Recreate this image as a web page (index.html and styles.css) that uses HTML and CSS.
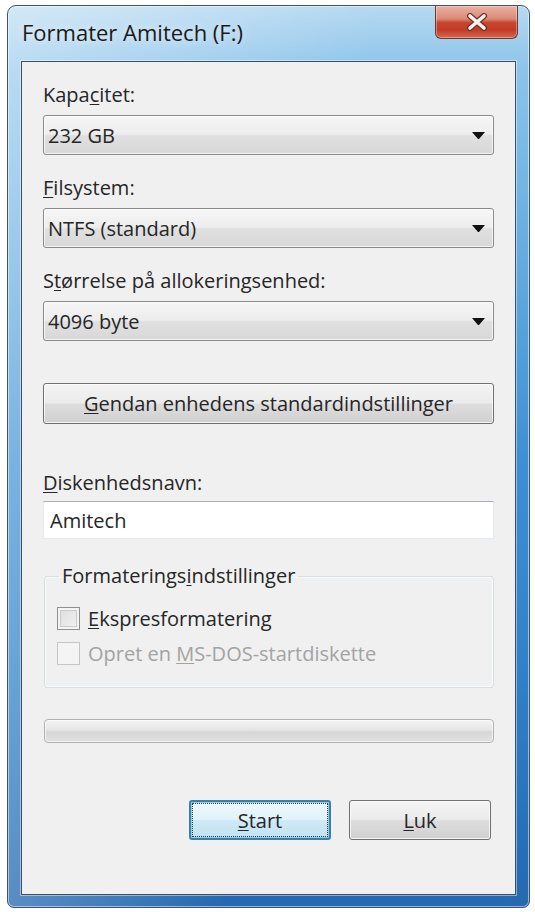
FILE: index.html
```html
<!DOCTYPE html>
<html lang="da">
<head>
    <meta charset="UTF-8">
    <meta name="viewport" content="width=device-width, initial-scale=1.0">
    <title>Formater Amitech (F:)</title>
    <link rel="stylesheet" href="styles.css">
</head>
<body>
    <div class="window">
        <div class="titlebar">
            <span class="title">Formater Amitech (F:)</span>
            <div class="close-btn">
                <svg width="24" height="18" viewBox="0 0 24 18">
                    <path d="M5 3 L19 15 M19 3 L5 15" stroke="#6a3228" stroke-width="6" stroke-linecap="round"/>
                    <path d="M5 3 L19 15 M19 3 L5 15" stroke="#fbf1ec" stroke-width="3.6" stroke-linecap="round"/>
                </svg>
            </div>
        </div>

        <div class="client">
            <div class="label">Kapa<u>c</u>itet:</div>
            <div class="combo">
                <span>232 GB</span>
                <svg class="arrow" width="13" height="7" viewBox="0 0 13 7"><path d="M0 0 H13 L7 7 H6 Z" fill="#111"/></svg>
            </div>

            <div class="label"><u>F</u>ilsystem:</div>
            <div class="combo">
                <span>NTFS (standard)</span>
                <svg class="arrow" width="13" height="7" viewBox="0 0 13 7"><path d="M0 0 H13 L7 7 H6 Z" fill="#111"/></svg>
            </div>

            <div class="label">S<u>t</u>ørrelse på allokeringsenhed:</div>
            <div class="combo">
                <span>4096 byte</span>
                <svg class="arrow" width="13" height="7" viewBox="0 0 13 7"><path d="M0 0 H13 L7 7 H6 Z" fill="#111"/></svg>
            </div>

            <div class="btn wide"><u>G</u>endan enhedens standardindstillinger</div>

            <div class="label name-label"><u>D</u>iskenhedsnavn:</div>
            <div class="textbox">Amitech</div>

            <fieldset class="group">
                <legend>Formaterings<u>i</u>ndstillinger</legend>
                <div class="check-row">
                    <span class="checkbox"></span>
                    <span><u>E</u>kspresformatering</span>
                </div>
                <div class="check-row disabled">
                    <span class="checkbox"></span>
                    <span>Opret en <u>M</u>S-DOS-startdiskette</span>
                </div>
            </fieldset>

            <div class="progress"></div>

            <div class="actions">
                <div class="btn default"><u>S</u>tart</div>
                <div class="btn"><u>L</u>uk</div>
            </div>
        </div>
    </div>
</body>
</html>
```

FILE: styles.css
```css
body {
    margin: 0;
    background: #fff;
    font-family: "Open Sans", "Noto Sans", sans-serif;
    font-size: 20px;
    color: #262626;
}

u {
    text-decoration-thickness: 1px;
    text-underline-offset: 2px;
}

.window {
    width: 523px;
    height: 903px;
    margin: 5px 0 0 7px;
    box-sizing: border-box;
    border: 1px solid #3f5366;
    border-radius: 9px 9px 7px 7px;
    padding: 0 13px 12px 13px;
    display: flex;
    flex-direction: column;
    background:
        linear-gradient(100deg, rgba(255,255,255,0.4) 0%, rgba(255,255,255,0.12) 40%, rgba(255,255,255,0) 55%),
        linear-gradient(180deg, #b6d9f1 0%, #8cc4ea 7%, #6aafe0 25%, #3f90d2 50%, #2f80c6 75%, #2569b0 100%);
    box-shadow: inset 0 0 0 1px rgba(255,255,255,0.5);
}

.titlebar {
    height: 55px;
    display: flex;
    align-items: flex-start;
    flex-shrink: 0;
}

.title {
    font-size: 22px;
    line-height: 30px;
    color: #1a1a1a;
    margin-top: 11px;
    margin-left: 1px;
    text-shadow: 0 0 8px rgba(255,255,255,0.8);
}

.close-btn {
    margin-left: auto;
    margin-right: -2px;
    width: 83px;
    height: 33px;
    box-sizing: border-box;
    border: 1px solid #6a3a30;
    border-top: none;
    border-radius: 0 0 6px 6px;
    display: flex;
    align-items: center;
    justify-content: center;
    background: linear-gradient(180deg, #e9b1a3 0%, #dc8a76 40%, #c8452f 52%, #c23a26 75%, #d46b4e 100%);
    box-shadow: inset 0 0 0 1px rgba(255,255,255,0.35);
}

.client {
    flex: 1;
    box-sizing: border-box;
    background: #f0f0f0;
    border: 1px solid #3a4f61;
    box-shadow: 0 0 0 1px rgba(255,255,255,0.45);
    padding: 0 21px;
    display: flex;
    flex-direction: column;
}

.label {
    line-height: 24px;
    margin-top: 21px;
}

.combo {
    height: 40px;
    margin-top: 8px;
    box-sizing: border-box;
    border: 1px solid #8a8a8a;
    border-radius: 3px;
    padding: 0 8px 0 4px;
    display: flex;
    align-items: center;
    justify-content: space-between;
    background: linear-gradient(180deg, #f6f6f6 0%, #ededed 48%, #e0e0e0 52%, #d8d8d8 100%);
    box-shadow: inset 0 0 0 1px rgba(255,255,255,0.7);
}

.btn {
    height: 40px;
    box-sizing: border-box;
    border: 1px solid #707070;
    border-radius: 3px;
    display: flex;
    align-items: center;
    justify-content: center;
    background: linear-gradient(180deg, #f4f4f4 0%, #ebebeb 48%, #dddddd 52%, #d0d0d0 100%);
    box-shadow: inset 0 0 0 1px rgba(255,255,255,0.75);
}

.btn.wide {
    margin-top: 42px;
    height: 41px;
}

.name-label {
    margin-top: 47px;
}

.textbox {
    height: 38px;
    margin-top: 6px;
    box-sizing: border-box;
    background: #fff;
    border: 1px solid #e3e9ef;
    border-top-color: #abadb3;
    padding: 0 6px;
    display: flex;
    align-items: center;
}

.group {
    margin: 25px 0 0 1px;
    padding: 17px 12px 21px 12px;
    border: 1px solid #d5dfe5;
    border-radius: 3px;
    box-shadow: inset 0 0 0 1px rgba(255,255,255,0.6);
    display: flex;
    flex-direction: column;
    gap: 9px;
}

.group legend {
    line-height: 24px;
    padding: 0 3px;
    margin-left: 2px;
}

.check-row {
    height: 26px;
    display: flex;
    align-items: center;
    gap: 8px;
}

.checkbox {
    width: 23px;
    height: 23px;
    box-sizing: border-box;
    border: 1px solid #8e8f8f;
    background: linear-gradient(135deg, #dcdcdc 0%, #f4f4f4 100%);
    box-shadow: inset 0 0 0 2px #f4f4f4, inset 0 0 0 3px #c9c9c9;
}

.disabled {
    color: #a3a3a3;
}

.disabled .checkbox {
    border-color: #c5c5c5;
    background: #f4f4f4;
    box-shadow: none;
}

.progress {
    height: 24px;
    margin: 31px 0 0 1px;
    box-sizing: border-box;
    border: 1px solid #b2b2b2;
    border-radius: 4px;
    background: linear-gradient(180deg, #f4f4f4 0%, #e6e6e6 45%, #d6d6d6 55%, #e2e2e2 100%);
    box-shadow: inset 0 0 0 1px rgba(255,255,255,0.6);
}

.actions {
    margin-top: 57px;
    margin-right: 3px;
    display: flex;
    justify-content: flex-end;
    gap: 18px;
}

.actions .btn {
    width: 142px;
}

.btn.default {
    border: 2px solid #3c7fa8;
    background: linear-gradient(180deg, #eef8fd 0%, #e2f3fc 48%, #cfe9f6 52%, #c2e2f2 100%);
    box-shadow: inset 0 0 0 1px #8fd2ee;
    outline: 1px dotted #2a3a44;
    outline-offset: -4px;
}
```
